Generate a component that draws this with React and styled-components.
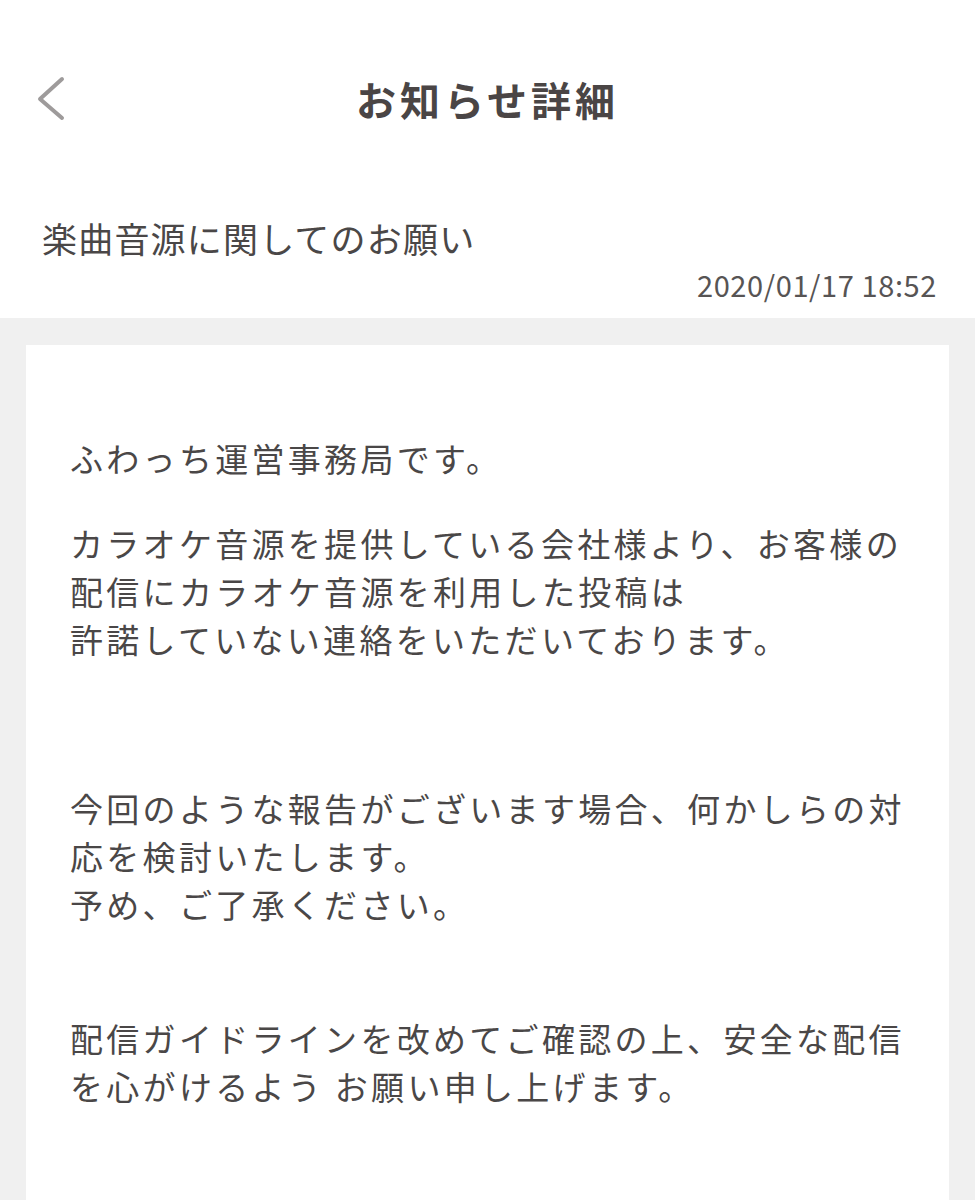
import React from 'react';
import styled, { createGlobalStyle } from 'styled-components';

const GlobalStyle = createGlobalStyle`
  html, body {
    margin: 0;
    padding: 0;
    background: #ffffff;
  }
  body {
    font-family: "Noto Sans CJK JP", "Noto Sans", sans-serif;
    color: #4a4747;
  }
  * {
    box-sizing: border-box;
  }
`;

const Page = styled.div`
  display: flex;
  flex-direction: column;
  min-height: 100vh;
`;

const Header = styled.header`
  display: grid;
  grid-template-columns: 1fr auto 1fr;
  align-items: center;
  height: 198px;
`;

const BackButton = styled.button`
  justify-self: start;
  display: flex;
  align-items: center;
  background: none;
  border: none;
  padding: 0 0 0 36px;
  margin: 0;
  cursor: pointer;
  color: #9e9b9b;
`;

const Title = styled.h1`
  margin: 0;
  font-size: 40px;
  font-weight: 700;
  letter-spacing: 4px;
  color: #4a4545;
  line-height: 1;
`;

const SubjectBlock = styled.section`
  display: flex;
  flex-direction: column;
  padding: 15px 38px 15px 42px;
`;

const Subject = styled.h2`
  margin: 0;
  font-size: 35px;
  font-weight: 400;
  line-height: 50px;
  letter-spacing: 1.2px;
  color: #4a4747;
`;

const DateText = styled.time`
  align-self: flex-end;
  margin-top: 2px;
  font-size: 29px;
  line-height: 38px;
  color: #575454;
  letter-spacing: 0.6px;
`;

const GrayArea = styled.div`
  flex: 1;
  display: flex;
  flex-direction: column;
  background: #f0f0f0;
  padding: 27px 26px 0;
`;

const Card = styled.article`
  flex: 1;
  background: #ffffff;
  padding: 89px 40px 200px 44px;
`;

const Paragraph = styled.p`
  margin: ${props => props.$gap || 0}px 0 0;
  font-size: 33px;
  line-height: 48px;
  letter-spacing: 3.3px;
  color: #4a4747;
`;

const ChevronLeft = () => (
  <svg width="30" height="48" viewBox="0 0 30 48" fill="none">
    <polyline
      points="26,4 4,24 26,43"
      stroke="currentColor"
      strokeWidth="4"
      strokeLinecap="round"
      strokeLinejoin="round"
    />
  </svg>
);

const paragraphs = [
  { gap: 0, lines: ['ふわっち運営事務局です。'] },
  {
    gap: 37,
    lines: [
      'カラオケ音源を提供している会社様より、お客様の',
      '配信にカラオケ音源を利用した投稿は',
      '許諾していない連絡をいただいております。',
    ],
  },
  {
    gap: 121,
    lines: [
      '今回のような報告がございます場合、何かしらの対',
      '応を検討いたします。',
      '予め、ご了承ください。',
    ],
  },
  {
    gap: 86,
    lines: [
      '配信ガイドラインを改めてご確認の上、安全な配信',
      'を心がけるよう お願い申し上げます。',
    ],
  },
];

const App = () => {
  return (
    <Page>
      <GlobalStyle />
      <Header>
        <BackButton aria-label="戻る">
          <ChevronLeft />
        </BackButton>
        <Title>お知らせ詳細</Title>
        <div />
      </Header>

      <SubjectBlock>
        <Subject>楽曲音源に関してのお願い</Subject>
        <DateText>2020/01/17 18:52</DateText>
      </SubjectBlock>

      <GrayArea>
        <Card>
          {paragraphs.map((p, i) => (
            <Paragraph key={i} $gap={p.gap}>
              {p.lines.map((line, j) => (
                <React.Fragment key={j}>
                  {j > 0 && <br />}
                  {line}
                </React.Fragment>
              ))}
            </Paragraph>
          ))}
        </Card>
      </GrayArea>
    </Page>
  );
};

export default App;
